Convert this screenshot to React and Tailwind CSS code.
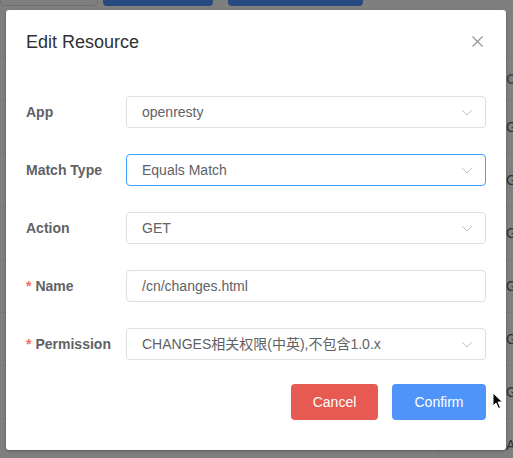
import React from "react";

const font = { fontFamily: '"Liberation Sans", "Noto Sans CJK SC", sans-serif' };

const rows = ["GET", "GET", "GET", "GET", "GET", "GET", "ADD"];

function Chevron() {
  return (
    <svg width="12" height="7" viewBox="0 0 12 7" className="shrink-0">
      <path d="M1 1 L6 6 L11 1" fill="none" stroke="#c0c4cc" strokeWidth="1" />
    </svg>
  );
}

function Field({ label, required, value, select, focused }) {
  return (
    <div className="flex items-center h-[32px]">
      <label className="w-[100px] shrink-0 text-[14px] font-bold text-[#606266]">
        {required && <span className="text-[#f56c6c] mr-[4px]">*</span>}
        {label}
      </label>
      <div
        className={`flex-1 h-[32px] flex items-center justify-between rounded-[4px] border pl-[15px] pr-[12px] ${
          focused ? "border-[#409eff]" : "border-[#dcdfe6]"
        }`}
      >
        <span className="text-[14px] text-[#606266] whitespace-nowrap">{value}</span>
        {select && <Chevron />}
      </div>
    </div>
  );
}

export default function App() {
  return (
    <div className="relative w-[513px] h-[458px] overflow-hidden bg-white" style={font}>
      {/* page behind the modal */}
      <div className="flex gap-[5px] -mt-[30px] h-[36px]">
        <div className="w-[98px] rounded-[4px] border border-[#dcdfe6] bg-white" />
        <div className="w-[110px] rounded-[4px] bg-[#4c92fe]" />
        <div className="ml-[10px] w-[135px] rounded-[4px] bg-[#4c92fe]" />
      </div>
      <div className="mt-[51px] border-t border-[#ebeef5]">
        <div className="h-[43px] flex items-center border-b border-[#ebeef5]">
          <div className="flex-1" />
          <div className="w-[7px] overflow-hidden text-[14px] font-bold text-[#909399]">Ct</div>
        </div>
        {rows.map((r, i) => (
          <div key={i} className="h-[53px] flex items-center border-b border-[#ebeef5]">
            <div className="w-[438px] h-full" />
            <div className="flex-1 h-full flex items-center justify-end border-l border-[#ebeef5]">
              <span className="w-[7px] overflow-hidden text-[14px] text-[#606266]">{r}</span>
            </div>
          </div>
        ))}
      </div>

      {/* overlay */}
      <div className="absolute inset-0 bg-black/50" />

      {/* dialog */}
      <div className="absolute left-[6px] top-[10px] w-[500px] h-[440px] bg-white rounded-[3px] shadow-[0_1px_3px_rgba(0,0,0,0.3)] px-[20px] pt-[20px] flex flex-col">
        <div className="flex items-center justify-between h-[24px]">
          <h2 className="text-[18px] leading-[24px] text-[#303133]">Edit Resource</h2>
          <svg width="11" height="11" viewBox="0 0 11 11" className="mr-[3px] -mt-[2px]">
            <path d="M0.5 0.5 L10.5 10.5 M10.5 0.5 L0.5 10.5" stroke="#909399" strokeWidth="1.1" />
          </svg>
        </div>

        <div className="mt-[42px] flex flex-col gap-[26px]">
          <Field label="App" value="openresty" select />
          <Field label="Match Type" value="Equals Match" select focused />
          <Field label="Action" value="GET" select />
          <Field label="Name" required value="/cn/changes.html" />
          <Field label="Permission" required value="CHANGES相关权限(中英),不包含1.0.x" select />
        </div>

        <div className="mt-[24px] flex justify-end gap-[14px]">
          <button className="h-[36px] w-[87px] rounded-[4px] bg-[#e65a52] text-white text-[14px]">Cancel</button>
          <button className="h-[36px] w-[94px] rounded-[4px] bg-[#4f95f9] text-white text-[14px]">Confirm</button>
        </div>
      </div>

      {/* mouse cursor */}
      <svg className="absolute left-[492px] top-[392px]" width="12" height="18" viewBox="0 0 12 18">
        <path d="M1 1 L1 14 L4 11 L6.5 16.5 L8.5 15.5 L6 10 L10.5 10 Z" fill="#000" stroke="#fff" strokeWidth="1" />
      </svg>
    </div>
  );
}
